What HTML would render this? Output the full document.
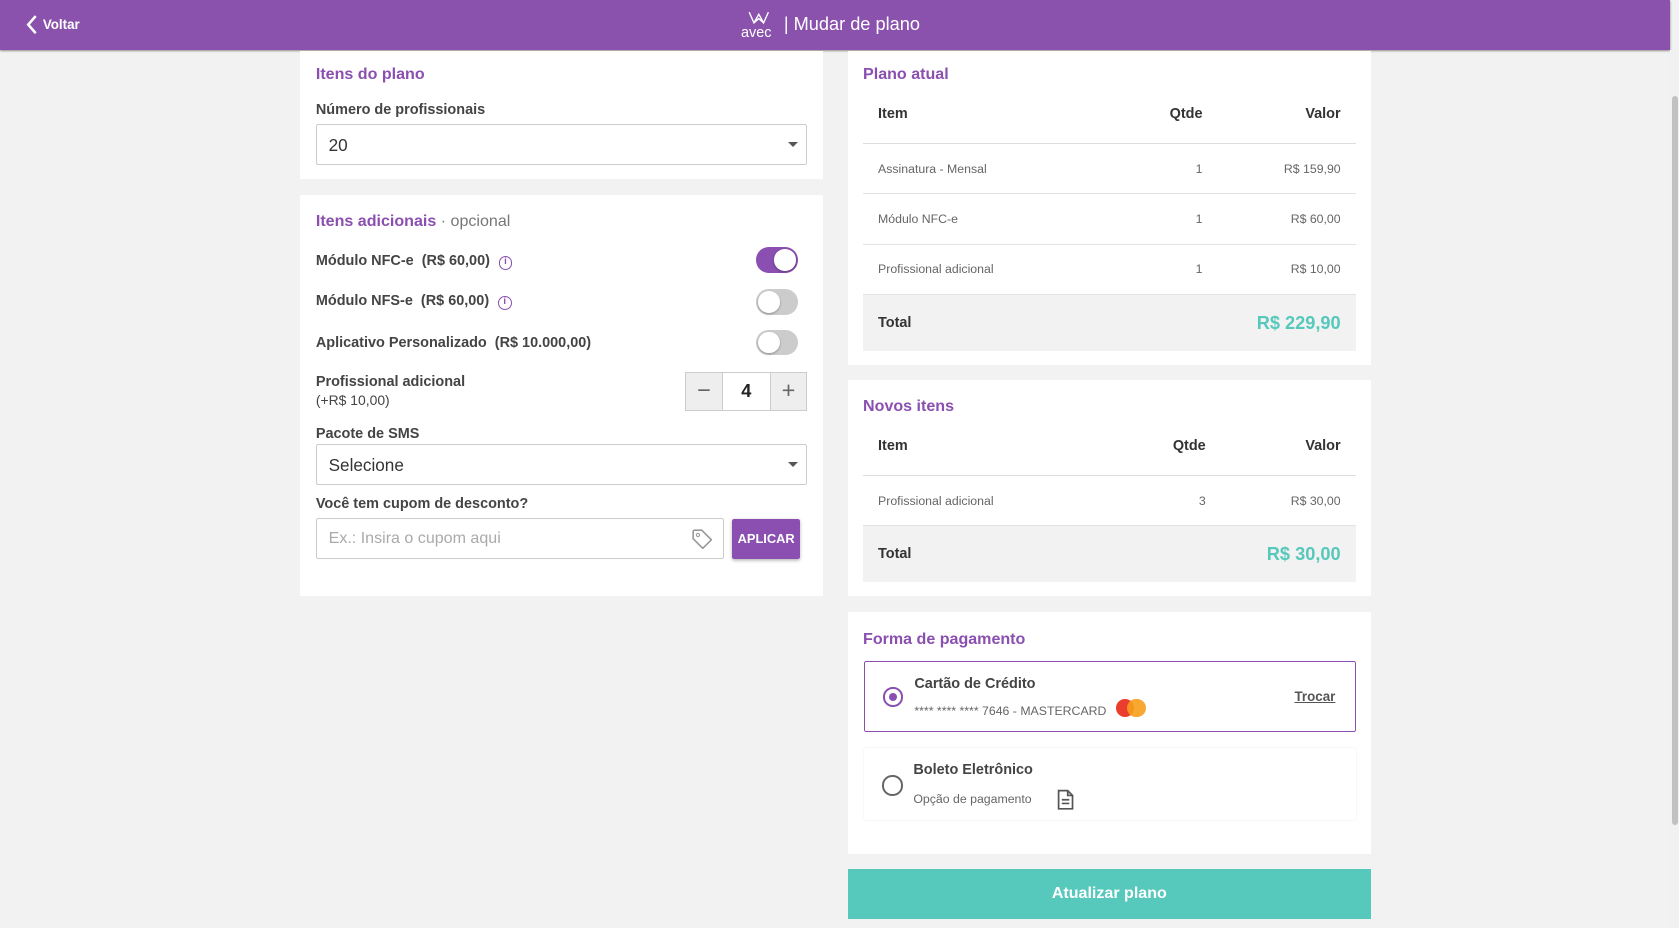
<!DOCTYPE html>
<html><head><meta charset="utf-8"><style>
*{box-sizing:border-box;margin:0;padding:0}
html,body{width:1679px;height:928px;overflow:hidden;background:#f2f2f2;font-family:"Liberation Sans",sans-serif;color:#333}
#w{zoom:1.0708;width:1568px;height:867px;position:relative}
.a{position:absolute}
.card{position:absolute;background:#fff}
.h{color:#8a4fb0;font-size:15px;font-weight:bold}
.lbl{font-size:13.5px;font-weight:bold;color:#444}
.sel{position:absolute;border:1px solid #ccc;border-radius:2px;height:38px;font-size:16px;color:#333;padding:9px 11px}
.caret{position:absolute;right:8px;top:16px;border-left:5px solid transparent;border-right:5px solid transparent;border-top:5px solid #555}
.tog{position:absolute;width:39px;height:24px;border-radius:12px;background:#ccc}
.tog i{position:absolute;top:2px;left:2px;width:20px;height:20px;border-radius:50%;background:#fff;box-shadow:0 1px 2px rgba(0,0,0,.3)}
.tog.on{background:#8a4fb0}.tog.on i{left:17px}
.info{display:inline-block;width:13px;height:13px;border:1.3px solid #8a4fb0;border-radius:50%;color:#8a4fb0;font-size:9px;text-align:center;line-height:10px;vertical-align:1px;margin-left:8px;font-weight:bold}
table{border-collapse:collapse;width:460px;table-layout:fixed}
td,th{font-size:11.5px;color:#666;padding:0 14px;height:47px;border-bottom:1px solid #e3e3e3;font-weight:normal}
th{font-size:13.5px;color:#333;font-weight:bold;height:54px;border-bottom:1px solid #ddd}
.r{text-align:right}
tr.tot td{background:#f2f2f2;border:none;font-size:13.5px;font-weight:bold;color:#333;height:53px}
tr.tot td.v{color:#56c8bc;font-size:17px}
</style></head><body><div id="w">
<div class="a" style="left:0;top:0;width:1560px;height:47px;background:#8a52ad;box-shadow:0 1px 2px rgba(0,0,0,.5)"></div>
<svg class="a" style="left:23px;top:14px" width="12" height="18"><path d="M10 1 L3 9 L10 17" stroke="#fff" stroke-width="2.4" fill="none"/></svg>
<div class="a" style="left:40px;top:16px;color:#fff;font-size:12.5px;font-weight:bold">Voltar</div>
<svg class="a" style="left:698px;top:9px" width="22" height="14"><path d="M2 2 L6.5 12 L11 4 L15.5 12 L20 2 M6.5 12 L11 8 L15.5 12" stroke="#fff" stroke-width="1.3" fill="none"/></svg>
<div class="a" style="left:692px;top:23px;color:#fff;font-size:13.5px">avec</div>
<div class="a" style="left:732px;top:13px;color:#fff;font-size:17px">| Mudar de plano</div>
<div class="a" style="left:1560px;top:47px;width:8px;height:820px;background:#f1f1f1"></div>
<div class="a" style="left:1561px;top:90px;width:6px;height:680px;background:#c1c1c1;border-radius:3px"></div>

<div class="card" style="left:280px;top:48px;width:489px;height:119px">
 <div class="a h" style="left:15px;top:13px">Itens do plano</div>
 <div class="a lbl" style="left:15px;top:47px">Número de profissionais</div>
 <div class="sel" style="left:15px;top:68px;width:459px">20<span class="caret"></span></div>
</div>
<div class="card" style="left:280px;top:182px;width:489px;height:375px">
 <div class="a" style="left:15px;top:16px;font-size:15px;color:#777"><span class="h">Itens adicionais</span> · opcional</div>
 <div class="a lbl" style="left:15px;top:54px">Módulo NFC-e &nbsp;(R$ 60,00)<span class="info">i</span></div>
 <div class="tog on" style="left:426px;top:49px"><i></i></div>
 <div class="a lbl" style="left:15px;top:92px">Módulo NFS-e &nbsp;(R$ 60,00)<span class="info">i</span></div>
 <div class="tog" style="left:426px;top:88px"><i></i></div>
 <div class="a lbl" style="left:15px;top:131px">Aplicativo Personalizado &nbsp;(R$ 10.000,00)</div>
 <div class="tog" style="left:426px;top:126px"><i></i></div>
 <div class="a lbl" style="left:15px;top:167px">Profissional adicional</div>
 <div class="a" style="left:15px;top:184px;font-size:13px;color:#444">(+R$ 10,00)</div>
 <div class="a" style="left:360px;top:165px;width:114px;height:37px;border:1px solid #ccc;background:#fff">
  <div class="a" style="left:0;top:0;width:34px;height:35px;background:#eee;border-right:1px solid #ccc;text-align:center;font-size:22px;line-height:33px;color:#666">−</div>
  <div class="a" style="left:34px;top:0;width:44px;height:35px;text-align:center;font-size:17px;font-weight:bold;line-height:35px;color:#222">4</div>
  <div class="a" style="left:78px;top:0;width:34px;height:35px;background:#eee;border-left:1px solid #ccc;text-align:center;font-size:22px;line-height:33px;color:#666">+</div>
 </div>
 <div class="a lbl" style="left:15px;top:216px">Pacote de SMS</div>
 <div class="sel" style="left:15px;top:233px;width:459px">Selecione<span class="caret"></span></div>
 <div class="a lbl" style="left:15px;top:281px">Você tem cupom de desconto?</div>
 <div class="sel" style="left:15px;top:302px;width:381px;color:#aaa;font-size:15px">Ex.: Insira o cupom aqui
  <svg class="a" style="right:10px;top:8px" width="20" height="20"><path d="M2 3 V10 L11 19 L19 11 L10 2 H3 Z" stroke="#999" stroke-width="1.5" fill="none"/><circle cx="6.5" cy="6.5" r="1.5" fill="none" stroke="#999"/></svg></div>
 <div class="a" style="left:404px;top:303px;width:63px;height:37px;background:#8a4fb0;border-radius:2px;color:#fff;font-size:12px;font-weight:bold;text-align:center;line-height:37px;box-shadow:0 1px 3px rgba(0,0,0,.3)">APLICAR</div>
</div>

<div class="card" style="left:792px;top:48px;width:488px;height:293px">
 <div class="a h" style="left:14px;top:13px">Plano atual</div>
 <table class="a" style="left:14px;top:32px">
  <colgroup><col style="width:240px"><col style="width:91px"><col style="width:129px"></colgroup>
  <tr><th style="text-align:left">Item</th><th class="r">Qtde</th><th class="r">Valor</th></tr>
  <tr><td>Assinatura - Mensal</td><td class="r">1</td><td class="r">R$ 159,90</td></tr>
  <tr><td>Módulo NFC-e</td><td class="r">1</td><td class="r">R$ 60,00</td></tr>
  <tr><td>Profissional adicional</td><td class="r">1</td><td class="r">R$ 10,00</td></tr>
  <tr class="tot"><td>Total</td><td></td><td class="r v">R$ 229,90</td></tr>
 </table>
</div>
<div class="card" style="left:792px;top:355px;width:488px;height:202px">
 <div class="a h" style="left:14px;top:16px">Novos itens</div>
 <table class="a" style="left:14px;top:35px">
  <colgroup><col style="width:240px"><col style="width:94px"><col style="width:126px"></colgroup>
  <tr><th style="text-align:left">Item</th><th class="r">Qtde</th><th class="r">Valor</th></tr>
  <tr><td>Profissional adicional</td><td class="r">3</td><td class="r">R$ 30,00</td></tr>
  <tr class="tot"><td>Total</td><td></td><td class="r v">R$ 30,00</td></tr>
 </table>
</div>
<div class="card" style="left:792px;top:572px;width:488px;height:226px">
 <div class="a h" style="left:14px;top:16px">Forma de pagamento</div>
 <div class="a" style="left:15px;top:45px;width:459px;height:67px;border:1px solid #8a4fb0;border-radius:2px">
  <div class="a" style="left:17px;top:24px;width:18px;height:18px;border:2px solid #8a4fb0;border-radius:50%"><div class="a" style="left:3px;top:3px;width:8px;height:8px;border-radius:50%;background:#8a4fb0"></div></div>
  <div class="a lbl" style="left:46px;top:13px;font-size:13.5px">Cartão de Crédito</div>
  <div class="a" style="left:46px;top:40px;font-size:11.5px;color:#666">**** **** **** 7646 - MASTERCARD</div>
  <div class="a" style="left:234px;top:35px;width:17px;height:17px;border-radius:50%;background:#eb3d2d"></div>
  <div class="a" style="left:245px;top:35px;width:17px;height:17px;border-radius:50%;background:#f79e1b;opacity:.9"></div>
  <div class="a" style="left:401px;top:26px;font-size:12.5px;font-weight:bold;color:#555;text-decoration:underline">Trocar</div>
 </div>
 <div class="a" style="left:15px;top:127px;width:459px;height:67px;box-shadow:0 0 2px rgba(0,0,0,.08);border-radius:2px">
  <div class="a" style="left:17px;top:25px;width:19px;height:19px;border:2px solid #666;border-radius:50%"></div>
  <div class="a lbl" style="left:46px;top:13px">Boleto Eletrônico</div>
  <div class="a" style="left:46px;top:41px;font-size:11.5px;color:#666">Opção de pagamento</div>
  <svg class="a" style="left:180px;top:38px" width="16" height="20"><path d="M1.5 1.5 H10 L14.5 6 V18.5 H1.5 Z M10 1.5 V6 H14.5 M4.5 10 H11.5 M4.5 13.5 H11.5" stroke="#555" stroke-width="1.6" fill="none"/></svg>
 </div>
</div>
<div class="a" style="left:792px;top:812px;width:488px;height:46px;background:#56c8bc;color:#fff;font-size:15px;font-weight:bold;text-align:center;line-height:46px">Atualizar plano</div>
</div></body></html>
